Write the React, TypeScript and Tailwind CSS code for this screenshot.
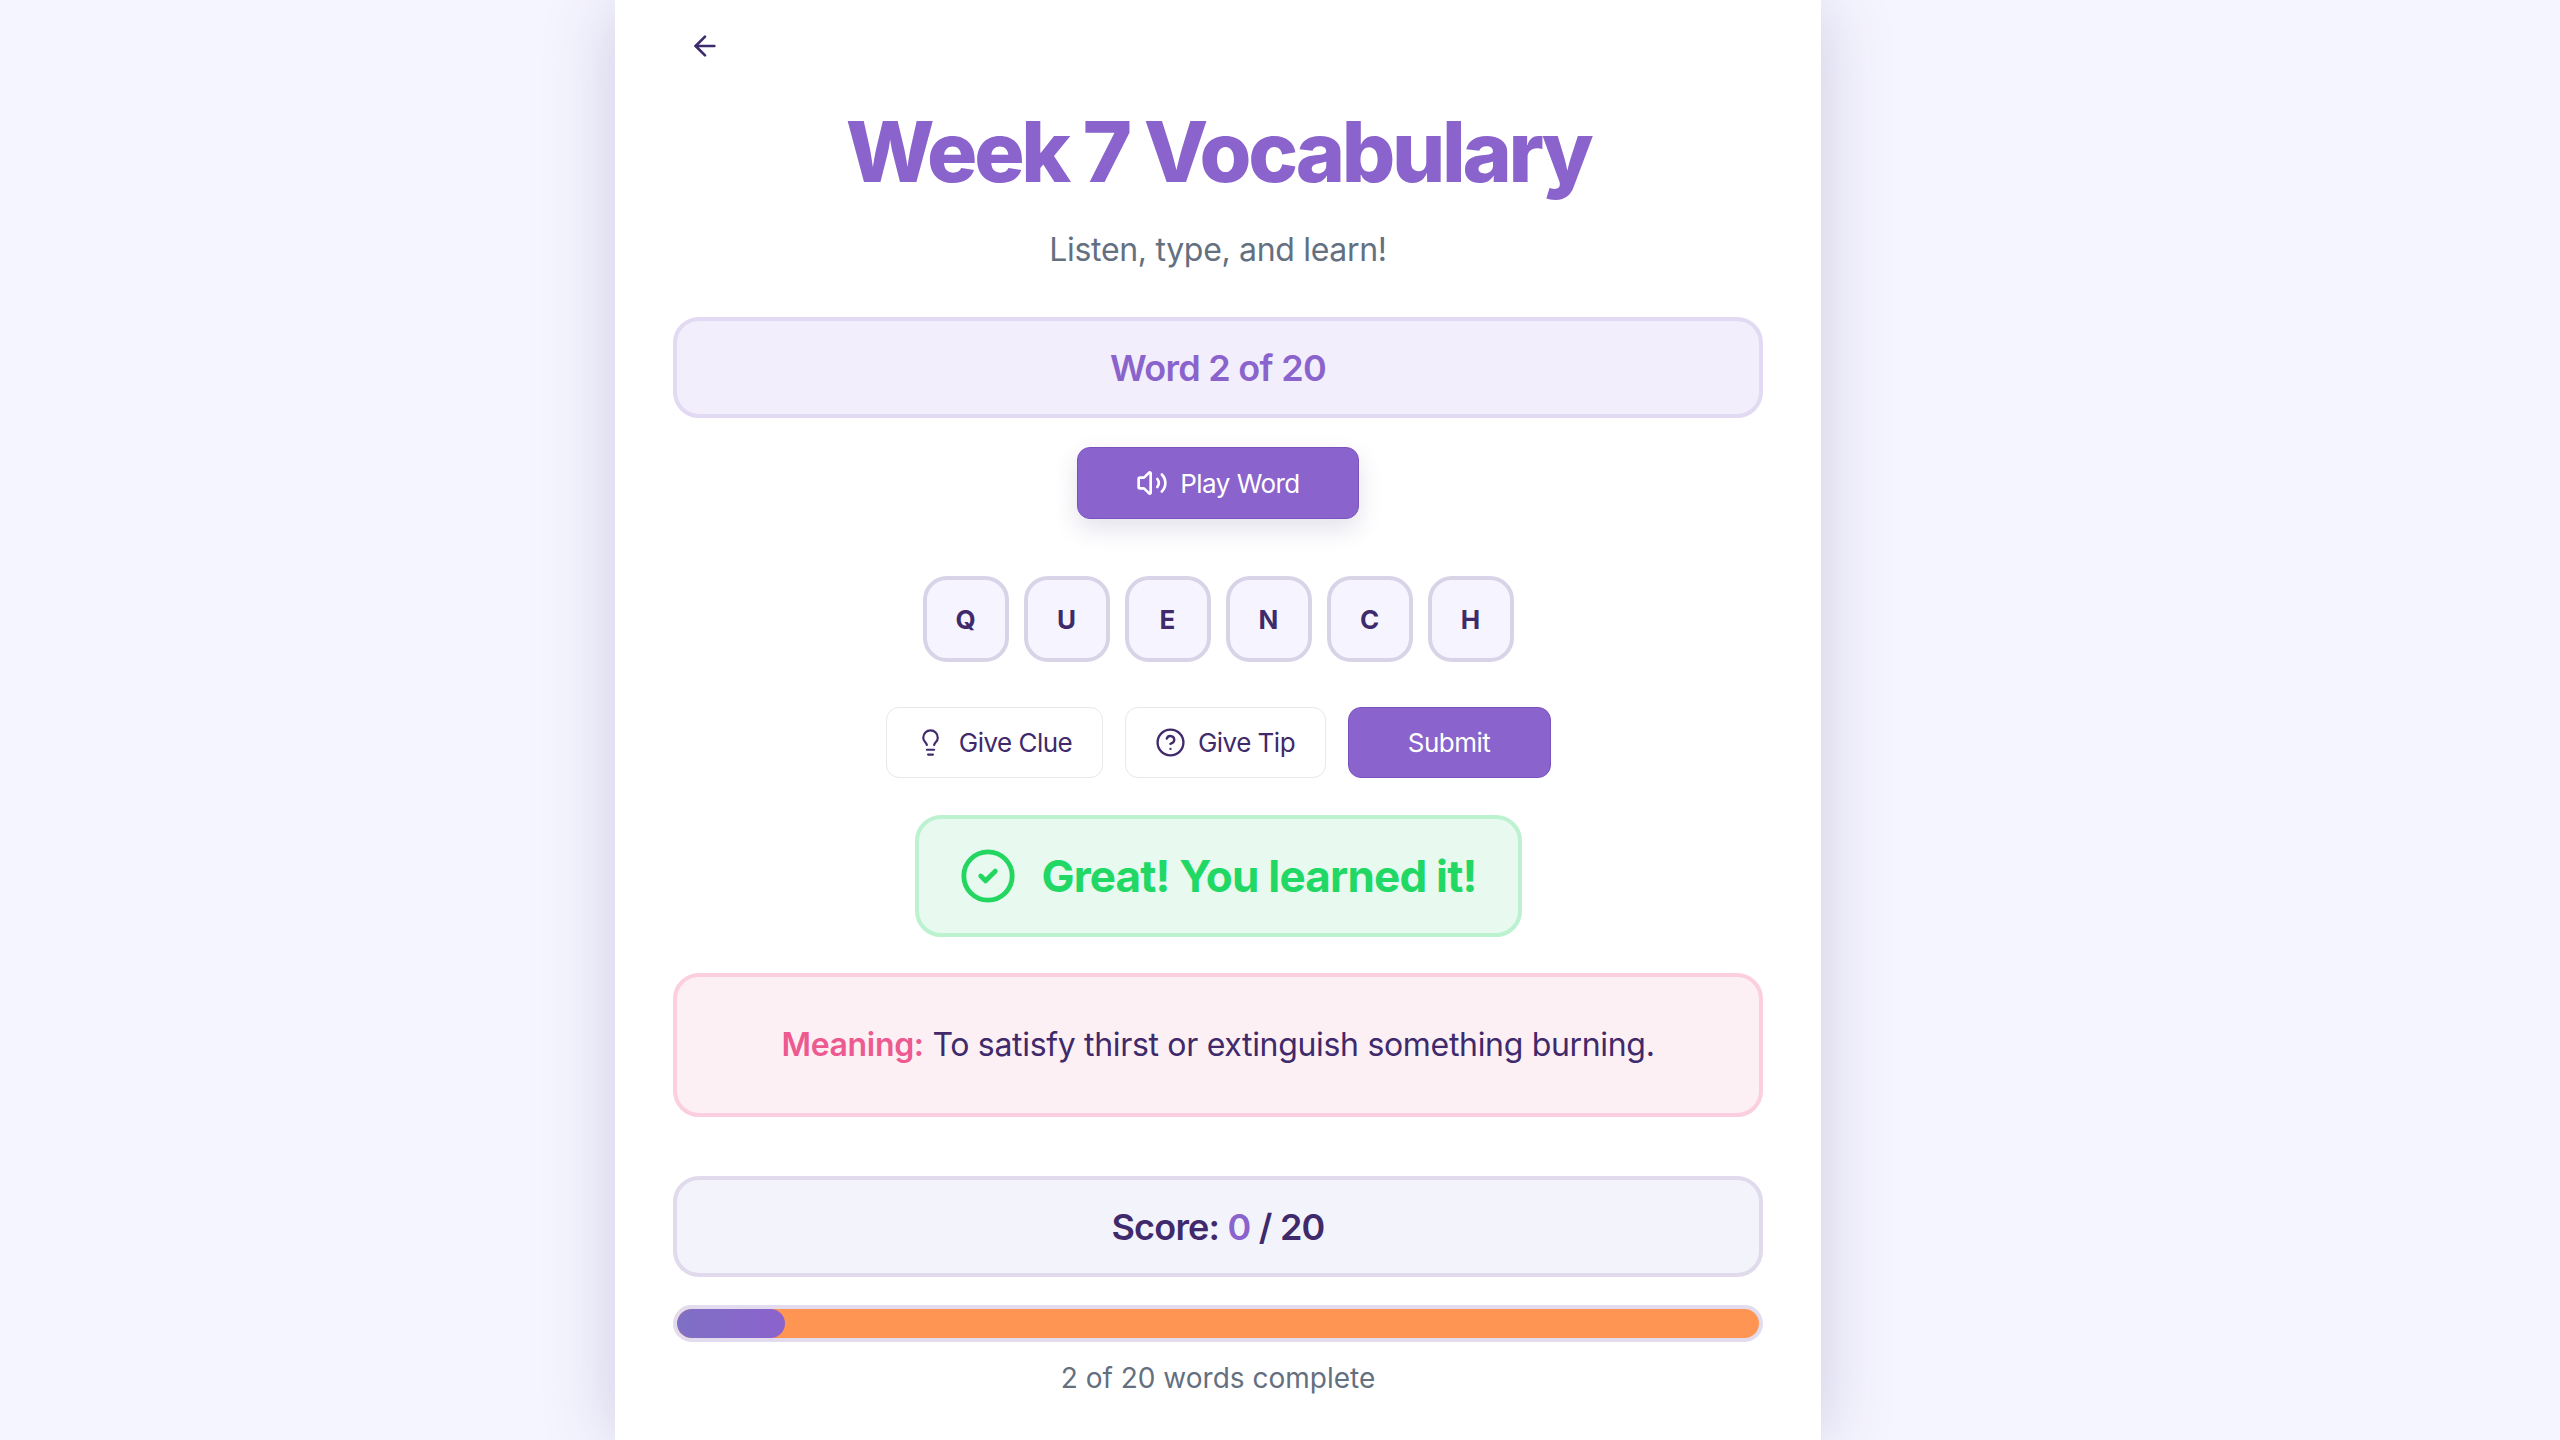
import { ArrowLeft, Volume2, Lightbulb, CircleHelp, CircleCheck } from "lucide-react";

const letters = ["Q", "U", "E", "N", "C", "H"];

export default function App() {
  return (
    <div className="h-[1440px] w-full overflow-hidden bg-[#f5f5ff] flex justify-start pl-[615px] font-['Inter',sans-serif]">
      <div className="w-[1206px] h-[1440px] bg-white shrink-0 px-[58px] flex flex-col items-center shadow-[0_4px_70px_rgba(60,40,110,0.2)]">
        <div className="w-full h-[92px] flex items-center">
          <ArrowLeft size={32} strokeWidth={2} className="text-[#3f2a6b] ml-[16px]" />
        </div>
        <h1 className="h-[120px] flex items-center text-[84px] font-extrabold tracking-[-0.04em] text-[#8a63cc] leading-none">
          Week 7 Vocabulary
        </h1>
        <p className="mt-[8px] h-[60px] flex items-center text-[32px] tracking-[-0.01em] text-[#64707f] leading-none">Listen, type, and learn!</p>
        <div className="mt-[37px] w-full h-[101px] rounded-[26px] border-[4px] border-[#e2d9f3] bg-[#f3eefb] flex items-center justify-center text-[36px] font-semibold tracking-[-0.02em] text-[#8a63cc]">
          Word 2 of 20
        </div>
        <button className="mt-[29px] w-[282px] h-[72px] rounded-[13px] border border-[#7a52c0] bg-[#8a63cc] text-white text-[26px] tracking-[-0.02em] flex items-center justify-center gap-[12px] shadow-[0_10px_24px_rgba(60,40,110,0.14)]">
          <Volume2 size={32} strokeWidth={2} />
          <span>Play Word</span>
        </button>
        <div className="mt-[57px] flex gap-[15px]">
          {letters.map((l) => (
            <div
              key={l}
              className="w-[86px] h-[86px] rounded-[24px] border-[4px] border-[#d9d3e8] bg-[#f6f5ff] flex items-center justify-center text-[26px] font-bold text-[#3f2a6b]"
            >
              {l}
            </div>
          ))}
        </div>
        <div className="mt-[45px] flex gap-[22px]">
          <button className="w-[217px] h-[71px] rounded-[13px] border-[1.5px] border-[#e8e8ec] bg-white text-[#3f2a6b] text-[26px] tracking-[-0.02em] flex items-center justify-center gap-[14px]">
            <Lightbulb size={29} strokeWidth={1.8} />
            <span>Give Clue</span>
          </button>
          <button className="w-[201px] h-[71px] rounded-[13px] border-[1.5px] border-[#e8e8ec] bg-white text-[#3f2a6b] text-[26px] tracking-[-0.02em] flex items-center justify-center gap-[12px]">
            <CircleHelp size={31} strokeWidth={1.8} />
            <span>Give Tip</span>
          </button>
          <button className="w-[203px] h-[71px] rounded-[13px] border border-[#7a52c0] bg-[#8a63cc] text-white text-[26px] tracking-[-0.02em] flex items-center justify-center">
            Submit
          </button>
        </div>
        <div className="mt-[37px] w-[607px] h-[122px] rounded-[26px] border-[4px] border-[#bcf2cf] bg-[#e8f9f0] flex items-center justify-center gap-[24px]">
          <CircleCheck size={58} strokeWidth={2} className="text-[#22d65f]" />
          <span className="text-[44px] font-bold text-[#22d865] tracking-[-0.018em]">Great! You learned it!</span>
        </div>
        <div className="mt-[36px] w-full h-[144px] rounded-[26px] border-[4px] border-[#fbcfdf] bg-[#fcf0f5] flex items-center justify-center text-[32px] tracking-[-0.01em] text-[#3f2a6b]">
          <span className="whitespace-pre">
            <span className="font-semibold text-[#ec5a90]">Meaning:</span> To satisfy thirst or extinguish something burning.
          </span>
        </div>
        <div className="mt-[59px] w-full h-[101px] rounded-[26px] border-[4px] border-[#e0daec] bg-[#f3f4fb] flex items-center justify-center text-[36px] font-semibold tracking-[-0.022em] text-[#3f2a6b]">
          <span className="whitespace-pre">
            Score: <span className="text-[#8a63cc]">0</span> / 20
          </span>
        </div>
        <div className="mt-[28px] w-full h-[37px] rounded-full border-[4px] border-[#e3dcee] bg-[#ff9552] overflow-hidden">
          <div className="h-full w-[10%] rounded-full bg-gradient-to-r from-[#7f70c5] to-[#8b62cc]" />
        </div>
        <p className="mt-[22px] text-[28px] leading-none text-[#64707f]">2 of 20 words complete</p>
      </div>
    </div>
  );
}
